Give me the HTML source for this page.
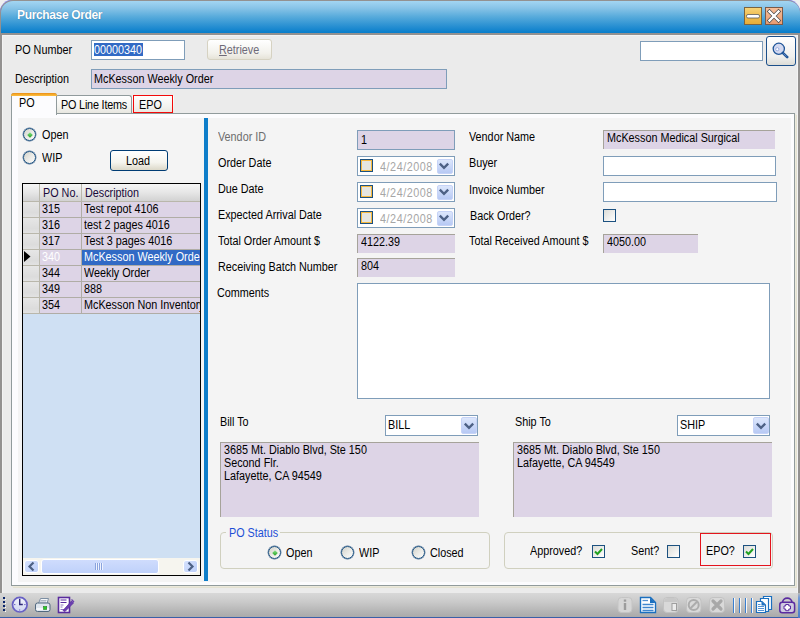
<!DOCTYPE html>
<html><head><meta charset="utf-8">
<style>
*{box-sizing:border-box;margin:0;padding:0}
html,body{width:800px;height:618px;overflow:hidden;background:#efefef}
body{position:relative;font-family:"Liberation Sans",sans-serif;font-size:11px;color:#000}
.a{position:absolute}
.t{position:absolute;white-space:nowrap;line-height:13px;font-size:12px;letter-spacing:0;transform:scaleX(0.9);transform-origin:0 0}
.box{position:absolute;border:1px solid #7f9db9;background:#fff}
.lav{position:absolute;background:#ddd4e6;border-top:1px solid #a6a39a;border-left:1px solid #a6a39a}
.lavb{position:absolute;background:#ddd4e6;border:1px solid #7f9db9}
.chk{position:absolute;width:13px;height:13px;border:1px solid #1c5180;background:linear-gradient(135deg,#dcdcd7,#fff)}
.radio{position:absolute;width:13px;height:13px;border-radius:50%;border:1px solid #1c5180;box-shadow:0 0 0 0.4px #4a6d94;background:linear-gradient(135deg,#d2d2ca 0%,#ececE8 55%,#fcfcfb 100%)}
.dot{position:absolute;left:3.5px;top:3.5px;width:4px;height:4px;transform:rotate(45deg);background:linear-gradient(135deg,#8fe68f,#1f9e1f)}
.combo{position:absolute;border:1px solid #7f9db9;background:#fff}
.dd{position:absolute;right:0;top:1px;width:16px;bottom:1px;border-radius:2px;background:linear-gradient(#dde7fc,#b7c9f4);border:1px solid #c6d3f7}
.btn{position:absolute;border:1px solid #003c74;border-radius:3px;background:linear-gradient(#ffffff 0%,#f5f4ee 60%,#dcd8c8 100%)}
</style></head>
<body>
<!-- window frame -->
<div class="a" style="left:0;top:0;width:800px;height:618px;background:#939190;border-radius:13px 13px 0 0;box-shadow:0 0 0 0.6px #8c8cf0"></div>
<div class="a" style="left:1px;top:1px;width:799px;height:32px;border-radius:12px 12px 0 0;background:linear-gradient(#a3d5f2 0%,#88c4e7 22%,#56aadb 50%,#2e93d3 75%,#077dcb 100%)"></div>
<div class="t" style="left:17px;top:7px;font-size:12px;font-weight:bold;color:#fff;letter-spacing:-0.35px;transform:none;line-height:16px;text-shadow:0 0 1px rgba(0,40,90,0.5)">Purchase Order</div>
<!-- min / close -->
<svg class="a" style="left:744px;top:7px" width="40" height="18">
<defs><linearGradient id="gmin" x1="0" y1="0" x2="0" y2="1"><stop offset="0" stop-color="#f7d47a"/><stop offset="0.5" stop-color="#efbd4f"/><stop offset="1" stop-color="#e7ac35"/></linearGradient>
<linearGradient id="gcl" x1="0" y1="0" x2="0" y2="1"><stop offset="0" stop-color="#f6bf9a"/><stop offset="1" stop-color="#e89a70"/></linearGradient></defs>
<rect x="0.5" y="0.5" width="17" height="17" fill="url(#gmin)" stroke="#7a6440"/>
<rect x="2.5" y="7.5" width="13" height="3.5" rx="1.5" fill="#fff" stroke="#5a5a5a" stroke-width="0.8"/>
<rect x="21.5" y="0.5" width="17" height="17" fill="url(#gcl)" stroke="#7a5a48"/>
<path d="M25.5 4.5L34.5 13.5M34.5 4.5L25.5 13.5" stroke="#4a4a4a" stroke-width="3.8" stroke-linecap="square"/>
<path d="M25.5 4.5L34.5 13.5M34.5 4.5L25.5 13.5" stroke="#fff" stroke-width="2.4" stroke-linecap="square"/>
</svg>

<!-- body -->
<div class="a" style="left:2px;top:35px;width:796px;height:558px;background:#ebebeb;border:1px solid #f3f3f3;border-bottom:none"></div>

<div class="t" style="left:15px;top:44px">PO Number</div>
<div class="box" style="left:91px;top:40px;width:94px;height:20px"></div>
<div class="a" style="left:94px;top:43px;width:49px;height:13px;background:#316ac5"></div>
<div class="t" style="left:94px;top:44px;color:#fff">00000340</div>
<div class="btn" style="left:207px;top:39px;width:65px;height:21px;border-color:#d6d2c2;background:linear-gradient(#ffffff,#f2f1eb 70%,#e6e3d8)"></div>
<div class="t" style="left:219px;top:44px;color:#6e6a78"><u>R</u>etrieve</div>

<div class="t" style="left:15px;top:73px">Description</div>
<div class="lavb" style="left:91px;top:69px;width:356px;height:20px"></div>
<div class="t" style="left:94px;top:73px">McKesson Weekly Order</div>

<div class="box" style="left:640px;top:41px;width:123px;height:20px"></div>
<div class="btn" style="left:766px;top:36px;width:30px;height:30px;border-color:#1c4f8a;background:linear-gradient(#fff,#f0f0ee 70%,#dcdcd7)"></div>
<svg class="a" style="left:771px;top:41px" width="20" height="20"><circle cx="7.8" cy="7.8" r="5.6" fill="#d3d9f0" stroke="#1f5598" stroke-width="1.3"/><circle cx="6.3" cy="8.2" r="1.6" fill="#fff" stroke="#90a6dc" stroke-width="0.9"/><path d="M11.8 11.8L16.2 16.2" stroke="#1f5598" stroke-width="2.6" stroke-linecap="round"/><path d="M12.5 12.5L15.5 15.5" stroke="#6f90c8" stroke-width="0.8"/></svg>

<!-- tabs -->
<div class="a" style="left:56px;top:95px;width:76px;height:19px;border:1px solid #919b9c;border-bottom:none;border-radius:2px 3px 0 0;background:linear-gradient(#fff,#f3f3ef 60%,#e6e5de)"></div>
<div class="t" style="left:61px;top:99px;letter-spacing:-0.2px">PO Line Items</div>
<div class="a" style="left:132px;top:95px;width:42px;height:19px;border-radius:2px 2px 0 0;background:linear-gradient(#fff,#f3f3ef 60%,#e6e5de)"></div>
<div class="a" style="left:133px;top:95px;width:40px;height:18px;border:1px solid #f20a0a"></div>
<div class="t" style="left:139px;top:99px">EPO</div>

<!-- tab panel -->
<div class="a" style="left:11px;top:113px;width:784px;height:473px;border:1px solid #919b9c;background:#fcfcfe;box-shadow:1px 1px 0 #ebe9dc,2px 2px 0 #e4e2d2"></div>
<div class="a" style="left:11px;top:93px;width:46px;height:22px;border:1px solid #919b9c;border-bottom:none;border-radius:3px 3px 0 0;background:#fcfcfe"></div>
<div class="a" style="left:11px;top:93px;width:46px;height:3px;border-radius:3px 3px 0 0;background:linear-gradient(#e98d18,#f6ad2c 55%,#fbbe45)"></div>
<div class="t" style="left:19px;top:97px">PO</div>
<div class="a" style="left:18px;top:118px;width:773px;height:464px;background:#f4f4f4"></div>

<!-- left -->
<div class="radio" style="left:23px;top:128px"><div class="dot"></div></div>
<div class="t" style="left:42px;top:129px">Open</div>
<div class="radio" style="left:23px;top:151px"></div>
<div class="t" style="left:42px;top:152px">WIP</div>
<div class="btn" style="left:110px;top:150px;width:58px;height:21px"></div>
<div class="t" style="left:126px;top:155px">Load</div>

<div id="grid" class="a" style="left:22px;top:183px;width:179px;height:393px;border:1px solid #000;background:#cfe0f3;overflow:hidden"><div class="a" style="left:0;top:0;width:177px;height:17px;background:linear-gradient(#f6f6f6,#e6e6e6 50%,#d2d2d2)"></div><div class="a" style="left:0;top:17px;width:177px;height:1px;background:#b9b7ab"></div><div class="a" style="left:16px;top:0;width:1px;height:17px;background:#b9b7ab"></div><div class="a" style="left:58px;top:0;width:1px;height:17px;background:#b9b7ab"></div><div class="t" style="left:20px;top:3px;color:#1a0a3a">PO No.</div><div class="t" style="left:62px;top:3px;color:#1a0a3a">Description</div><div class="a" style="left:0;top:18px;width:16px;height:16px;background:linear-gradient(#e6e6e6,#dcdcdc 70%,#e2e2e2);border-bottom:1px solid #b9b7ab"></div><div class="a" style="left:16px;top:18px;width:1px;height:16px;background:#b9b7ab"></div><div class="a" style="left:17px;top:18px;width:160px;height:16px;background:#ddd4e6;border-bottom:1px solid #b0ada5"></div><div class="a" style="left:58px;top:18px;width:1px;height:16px;background:#b0ada5"></div><div class="t" style="left:19px;top:19px;color:#000">315</div><div class="t" style="left:61px;top:19px;color:#000">Test repot 4106</div><div class="a" style="left:0;top:34px;width:16px;height:16px;background:linear-gradient(#e6e6e6,#dcdcdc 70%,#e2e2e2);border-bottom:1px solid #b9b7ab"></div><div class="a" style="left:16px;top:34px;width:1px;height:16px;background:#b9b7ab"></div><div class="a" style="left:17px;top:34px;width:160px;height:16px;background:#ddd4e6;border-bottom:1px solid #b0ada5"></div><div class="a" style="left:58px;top:34px;width:1px;height:16px;background:#b0ada5"></div><div class="t" style="left:19px;top:35px;color:#000">316</div><div class="t" style="left:61px;top:35px;color:#000">test 2 pages 4016</div><div class="a" style="left:0;top:50px;width:16px;height:16px;background:linear-gradient(#e6e6e6,#dcdcdc 70%,#e2e2e2);border-bottom:1px solid #b9b7ab"></div><div class="a" style="left:16px;top:50px;width:1px;height:16px;background:#b9b7ab"></div><div class="a" style="left:17px;top:50px;width:160px;height:16px;background:#ddd4e6;border-bottom:1px solid #b0ada5"></div><div class="a" style="left:58px;top:50px;width:1px;height:16px;background:#b0ada5"></div><div class="t" style="left:19px;top:51px;color:#000">317</div><div class="t" style="left:61px;top:51px;color:#000">Test 3 pages 4016</div><div class="a" style="left:0;top:66px;width:16px;height:16px;background:linear-gradient(#e6e6e6,#dcdcdc 70%,#e2e2e2);border-bottom:1px solid #b9b7ab"></div><div class="a" style="left:16px;top:66px;width:1px;height:16px;background:#b9b7ab"></div><div class="a" style="left:17px;top:66px;width:160px;height:16px;background:#ddd4e6;border-bottom:1px solid #b0ada5"></div><div class="a" style="left:58px;top:66px;width:1px;height:16px;background:#b0ada5"></div><div class="a" style="left:59px;top:66px;width:118px;height:15px;background:#316ac5"></div><svg class="a" style="left:1px;top:67px" width="8" height="12"><path d="M0 0L6.5 5.5L0 11Z" fill="#000"/></svg><div class="t" style="left:19px;top:67px;color:#fff">340</div><div class="t" style="left:61px;top:67px;color:#fff">McKesson Weekly Order</div><div class="a" style="left:0;top:82px;width:16px;height:16px;background:linear-gradient(#e6e6e6,#dcdcdc 70%,#e2e2e2);border-bottom:1px solid #b9b7ab"></div><div class="a" style="left:16px;top:82px;width:1px;height:16px;background:#b9b7ab"></div><div class="a" style="left:17px;top:82px;width:160px;height:16px;background:#ddd4e6;border-bottom:1px solid #b0ada5"></div><div class="a" style="left:58px;top:82px;width:1px;height:16px;background:#b0ada5"></div><div class="t" style="left:19px;top:83px;color:#000">344</div><div class="t" style="left:61px;top:83px;color:#000">Weekly Order</div><div class="a" style="left:0;top:98px;width:16px;height:16px;background:linear-gradient(#e6e6e6,#dcdcdc 70%,#e2e2e2);border-bottom:1px solid #b9b7ab"></div><div class="a" style="left:16px;top:98px;width:1px;height:16px;background:#b9b7ab"></div><div class="a" style="left:17px;top:98px;width:160px;height:16px;background:#ddd4e6;border-bottom:1px solid #b0ada5"></div><div class="a" style="left:58px;top:98px;width:1px;height:16px;background:#b0ada5"></div><div class="t" style="left:19px;top:99px;color:#000">349</div><div class="t" style="left:61px;top:99px;color:#000">888</div><div class="a" style="left:0;top:114px;width:16px;height:16px;background:linear-gradient(#e6e6e6,#dcdcdc 70%,#e2e2e2);border-bottom:1px solid #b9b7ab"></div><div class="a" style="left:16px;top:114px;width:1px;height:16px;background:#b9b7ab"></div><div class="a" style="left:17px;top:114px;width:160px;height:16px;background:#ddd4e6;border-bottom:1px solid #b0ada5"></div><div class="a" style="left:58px;top:114px;width:1px;height:16px;background:#b0ada5"></div><div class="t" style="left:19px;top:115px;color:#000">354</div><div class="t" style="left:61px;top:115px;color:#000">McKesson Non Inventory</div><div class="a" style="left:0;top:374px;width:177px;height:17px;background:#f6f5ef"></div>
<div class="a" style="left:1px;top:376px;width:15px;height:13px;border:1px solid #fff;border-radius:3px;background:linear-gradient(135deg,#d6e2fd,#bccffa)"></div>
<svg class="a" style="left:1px;top:376px" width="15" height="13"><path d="M9.5 2.5L5.5 6.5L9.5 10.5" stroke="#4d6185" stroke-width="2.2" fill="none"/></svg>
<div class="a" style="left:18px;top:375px;width:118px;height:15px;border:1px solid #fff;border-radius:3px;background:linear-gradient(#cfdcfd,#bfd1fa)"></div>
<div class="a" style="left:72px;top:379px;width:8px;height:7px;background:repeating-linear-gradient(90deg,#8aa3dd 0 1px,#eef3ff 1px 2px)"></div>
<div class="a" style="left:160px;top:376px;width:15px;height:13px;border:1px solid #fff;border-radius:3px;background:linear-gradient(135deg,#d6e2fd,#bccffa)"></div>
<svg class="a" style="left:160px;top:376px" width="15" height="13"><path d="M5.5 2.5L9.5 6.5L5.5 10.5" stroke="#4d6185" stroke-width="2.2" fill="none"/></svg></div>

<!-- blue bar -->
<div class="a" style="left:204px;top:118px;width:4px;height:463px;background:#0e7dc9"></div>


<!-- form col1 -->
<div class="t" style="left:218px;top:131px;color:#6d6d6d">Vendor ID</div>
<div class="t" style="left:218px;top:157px">Order Date</div>
<div class="t" style="left:218px;top:183px">Due Date</div>
<div class="t" style="left:218px;top:209px">Expected Arrival Date</div>
<div class="t" style="left:218px;top:235px">Total Order Amount $</div>
<div class="t" style="left:218px;top:261px">Receiving Batch Number</div>
<div class="t" style="left:217px;top:287px">Comments</div>

<div class="lavb" style="left:357px;top:130px;width:98px;height:20px"></div>
<div class="t" style="left:361px;top:134px">1</div>
<div class="box" style="left:357px;top:156px;width:98px;height:20px"></div><div class="a" style="left:360px;top:159px;width:13px;height:13px;border:1px solid #1c5180;background:#e6e6e0;box-shadow:inset 0 0 0 1px #f8b93e"></div><div class="t" style="left:380px;top:161px;color:#a6a6a6;letter-spacing:0.6px">4/24/2008</div><div class="a" style="left:437px;top:159px;width:16px;height:15px;border-radius:2px;background:linear-gradient(#dde7fc,#b7c9f4);border:1px solid #c6d3f7"></div><svg class="a" style="left:438px;top:160px" width="12" height="12"><path d="M1.8 3.6L6 7.8L10.2 3.6" stroke="#4d6185" stroke-width="2.3" fill="none"/></svg><div class="box" style="left:357px;top:182px;width:98px;height:20px"></div><div class="a" style="left:360px;top:185px;width:13px;height:13px;border:1px solid #1c5180;background:#e6e6e0;box-shadow:inset 0 0 0 1px #f8b93e"></div><div class="t" style="left:380px;top:187px;color:#a6a6a6;letter-spacing:0.6px">4/24/2008</div><div class="a" style="left:437px;top:185px;width:16px;height:15px;border-radius:2px;background:linear-gradient(#dde7fc,#b7c9f4);border:1px solid #c6d3f7"></div><svg class="a" style="left:438px;top:186px" width="12" height="12"><path d="M1.8 3.6L6 7.8L10.2 3.6" stroke="#4d6185" stroke-width="2.3" fill="none"/></svg><div class="box" style="left:357px;top:208px;width:98px;height:20px"></div><div class="a" style="left:360px;top:211px;width:13px;height:13px;border:1px solid #1c5180;background:#e6e6e0;box-shadow:inset 0 0 0 1px #f8b93e"></div><div class="t" style="left:380px;top:213px;color:#a6a6a6;letter-spacing:0.6px">4/24/2008</div><div class="a" style="left:437px;top:211px;width:16px;height:15px;border-radius:2px;background:linear-gradient(#dde7fc,#b7c9f4);border:1px solid #c6d3f7"></div><svg class="a" style="left:438px;top:212px" width="12" height="12"><path d="M1.8 3.6L6 7.8L10.2 3.6" stroke="#4d6185" stroke-width="2.3" fill="none"/></svg>
<div class="lav" style="left:357px;top:234px;width:98px;height:19px"></div>
<div class="t" style="left:361px;top:236px">4122.39</div>
<div class="lav" style="left:357px;top:258px;width:98px;height:19px"></div>
<div class="t" style="left:361px;top:260px">804</div>
<div class="box" style="left:357px;top:283px;width:413px;height:116px"></div>

<!-- form col2 -->
<div class="t" style="left:469px;top:131px">Vendor Name</div>
<div class="t" style="left:469px;top:157px">Buyer</div>
<div class="t" style="left:469px;top:184px">Invoice Number</div>
<div class="t" style="left:470px;top:210px">Back Order?</div>
<div class="t" style="left:469px;top:235px">Total Received Amount $</div>
<div class="lav" style="left:603px;top:130px;width:172px;height:19px"></div>
<div class="t" style="left:607px;top:132px">McKesson Medical Surgical</div>
<div class="box" style="left:603px;top:156px;width:173px;height:20px"></div>
<div class="box" style="left:603px;top:182px;width:174px;height:20px"></div>
<div class="chk" style="left:603px;top:209px"></div>
<div class="lav" style="left:603px;top:234px;width:95px;height:19px"></div>
<div class="t" style="left:607px;top:236px">4050.00</div>

<!-- bill / ship -->
<div class="t" style="left:220px;top:416px">Bill To</div>
<div class="combo" style="left:385px;top:415px;width:93px;height:21px"><div class="dd"></div></div>
<svg class="a" style="left:463px;top:420px" width="12" height="12"><path d="M1.8 3.6L6 7.8L10.2 3.6" stroke="#4d6185" stroke-width="2.3" fill="none"/></svg>
<div class="t" style="left:388px;top:419px">BILL</div>
<div class="lav" style="left:220px;top:442px;width:259px;height:75px"></div>
<div class="t" style="left:224px;top:444px">3685 Mt. Diablo Blvd, Ste 150<br>Second Flr.<br>Lafayette, CA 94549</div>

<div class="t" style="left:515px;top:416px">Ship To</div>
<div class="combo" style="left:677px;top:415px;width:93px;height:21px"><div class="dd"></div></div>
<svg class="a" style="left:755px;top:420px" width="12" height="12"><path d="M1.8 3.6L6 7.8L10.2 3.6" stroke="#4d6185" stroke-width="2.3" fill="none"/></svg>
<div class="t" style="left:680px;top:419px">SHIP</div>
<div class="lav" style="left:513px;top:442px;width:259px;height:75px"></div>
<div class="t" style="left:517px;top:444px">3685 Mt. Diablo Blvd, Ste 150<br>Lafayette, CA 94549</div>

<!-- PO status group -->
<div class="a" style="left:220px;top:532px;width:270px;height:37px;border:1px solid #d0d0bf;border-radius:4px"></div>
<div class="a" style="left:226px;top:528px;width:54px;height:8px;background:#f4f4f4"></div>
<div class="t" style="left:229px;top:527px;color:#1d4fd6">PO Status</div>
<div class="radio" style="left:268px;top:546px"><div class="dot"></div></div>
<div class="t" style="left:286px;top:547px">Open</div>
<div class="radio" style="left:341px;top:546px"></div>
<div class="t" style="left:359px;top:547px">WIP</div>
<div class="radio" style="left:412px;top:546px"></div>
<div class="t" style="left:430px;top:547px">Closed</div>

<!-- approved group -->
<div class="a" style="left:504px;top:532px;width:269px;height:37px;border:1px solid #d0d0bf;border-radius:4px"></div>
<div class="t" style="left:530px;top:545px">Approved?</div>
<div class="chk" style="left:592px;top:545px"></div>
<svg class="a" style="left:592px;top:545px" width="13" height="13"><path d="M3 6.5L5.5 9L10 4" stroke="#21a121" stroke-width="2" fill="none"/></svg>
<div class="t" style="left:631px;top:545px">Sent?</div>
<div class="chk" style="left:667px;top:545px"></div>
<div class="a" style="left:700px;top:533px;width:71px;height:33px;border:1px solid #e4141d"></div>
<div class="t" style="left:706px;top:545px">EPO?</div>
<div class="chk" style="left:743px;top:545px"></div>
<svg class="a" style="left:743px;top:545px" width="13" height="13"><path d="M3 6.5L5.5 9L10 4" stroke="#21a121" stroke-width="2" fill="none"/></svg>

<!-- toolbar -->
<div class="a" style="left:0;top:593px;width:800px;height:25px;background:linear-gradient(#d8d8d8,#cacaca 35%,#b4b4b4 75%,#a8a8a8)"></div>
<div class="a" style="left:0;top:617px;width:800px;height:1px;background:#3a5fa8"></div>
<div class="a" style="left:798px;top:593px;width:2px;height:25px;background:linear-gradient(#b8b8b8,#6f98d8 20%,#4a7cc8)"></div>

<!-- toolbar icons -->
<svg class="a" style="left:0;top:593px" width="800" height="25">
<g fill="#0a246a">
<rect x="3" y="4" width="2" height="2"/><rect x="3" y="8" width="2" height="2"/><rect x="3" y="12" width="2" height="2"/><rect x="3" y="16" width="2" height="2"/>
</g>
<g fill="#fff"><rect x="5" y="6" width="1" height="1"/><rect x="5" y="10" width="1" height="1"/><rect x="5" y="14" width="1" height="1"/><rect x="5" y="18" width="1" height="1"/></g>
<!-- clock -->
<defs><linearGradient id="gclk" x1="0" y1="0" x2="0" y2="1"><stop offset="0" stop-color="#f4f6fc"/><stop offset="1" stop-color="#cdd3f0"/></linearGradient></defs>
<circle cx="19.8" cy="11.7" r="7.3" fill="url(#gclk)" stroke="#6860c4" stroke-width="1.7"/>
<path d="M19.7 5.8V11.5H22.8" stroke="#2e2878" stroke-width="1.4" fill="none"/>
<path d="M14 11.6H15.4M24.2 11.6H25.6M19.7 16.4V17.6" stroke="#6860c4" stroke-width="1"/>
<!-- printer -->
<path d="M40.5 5.5H48.5L47 10.5H38.5Z" fill="#f4f6f8" stroke="#7d8fa3" stroke-width="1"/>
<path d="M40.5 7.5H46.5M40 9H46" stroke="#9aa8b8" stroke-width="0.8"/>
<rect x="35.5" y="10" width="14.5" height="8.5" rx="2" fill="#dfe6ee" stroke="#51687f" stroke-width="1"/>
<rect x="36.5" y="15" width="12.5" height="2" fill="#f6f8fb"/>
<rect x="43.5" y="13.5" width="3.2" height="3" fill="#22d022" stroke="#2a7a2a" stroke-width="0.6"/>
<!-- edit doc -->
<rect x="58.5" y="4.5" width="11" height="15" fill="#fff" stroke="#5a2c9e" stroke-width="1.6"/>
<path d="M60.5 7H66.5M60.5 9.5H66.5" stroke="#5a2c9e" stroke-width="1.1"/>
<path d="M60.5 12H63.5M60.5 14H62.5M60.5 16.5H66" stroke="#8d75c0" stroke-width="1"/>
<path d="M63 17.5L71.5 8L73.5 10L65 18.5Z" fill="#6a3eb0" stroke="#5a2c9e" stroke-width="0.8"/>
<path d="M71.5 6.5L74 9" stroke="#6a3eb0" stroke-width="1.2"/>
<!-- right icons -->
<rect x="618" y="4.5" width="14" height="15" rx="3.5" fill="#d6d6d6" stroke="#c4c4c4" stroke-width="1"/>
<rect x="623.8" y="10" width="2.4" height="7" fill="#9c9c9c"/><rect x="623.8" y="6.5" width="2.4" height="2.2" fill="#9c9c9c"/>
<path d="M640.5 4.5H650.5L655.5 9.5V19.5H640.5Z" fill="#fff" stroke="#1a6fbf" stroke-width="1.4"/>
<path d="M650 4.5V10H655.5Z" fill="#1a6fbf"/>
<path d="M642.5 7.5H648" stroke="#5592d3" stroke-width="1.3"/>
<path d="M642.5 11.5H653.5M642.5 14.5H653.5M642.5 17.5H653.5" stroke="#3f86cf" stroke-width="1.6"/>
<rect x="663.5" y="4.5" width="14.5" height="15" rx="3.5" fill="#d9d9d9" stroke="#c2c2c2" stroke-width="1"/>
<path d="M664 9C664 6 666 5 668 5H674C676 5 677.5 6 677.5 9Z" fill="#c8c8c8"/>
<rect x="672" y="10.5" width="4.5" height="7" fill="#ececec" stroke="#9e9e9e" stroke-width="1"/>
<rect x="686.5" y="4.5" width="14.5" height="15" rx="3.5" fill="#d9d9d9" stroke="#c2c2c2" stroke-width="1"/>
<circle cx="693.7" cy="12" r="5" fill="none" stroke="#acacac" stroke-width="2"/>
<path d="M690.5 15.2L697 8.8" stroke="#acacac" stroke-width="2"/>
<rect x="709.5" y="4.5" width="15" height="15" rx="3.5" fill="#d9d9d9" stroke="#c2c2c2" stroke-width="1"/>
<path d="M713 8L721 16M721 8L713 16" stroke="#a8a8a8" stroke-width="3.2" stroke-linecap="round"/>
<path d="M733.5 5V20M739.5 5V20M745.5 5V20M751.5 5V20" stroke="#3a7fd0" stroke-width="1"/>
<path d="M734.5 5V20M740.5 5V20M746.5 5V20M752.5 5V20" stroke="#f8f8f8" stroke-width="1"/>
<path d="M763.5 3.5H771.5V16.5H763.5Z" fill="#fff" stroke="#1a6fbf" stroke-width="1.2"/>
<path d="M760.5 5.5H768.5V18.5H760.5Z" fill="#fff" stroke="#1a6fbf" stroke-width="1.2"/>
<path d="M756.5 8.5H762L765.5 12V19.5H756.5Z" fill="#fff" stroke="#1a6fbf" stroke-width="1.2"/>
<path d="M761.5 8.5V12.5H765.5Z" fill="#1a6fbf"/>
<path d="M758 11.5H760.5M758 13.5H764M758 15.5H764M758 17.5H764" stroke="#3f86cf" stroke-width="0.9"/>
<path d="M782.5 9.8C782.5 3.6 792 3.6 792 9.8" fill="none" stroke="#5b2ca0" stroke-width="1.6"/>
<rect x="779.8" y="9.3" width="14.8" height="10.4" rx="2.5" fill="#cfcbe0" stroke="#5b2ca0" stroke-width="1.5"/>
<path d="M785.7 11.5H788.8V13H790.5V16H788.8V17.7H785.7V16H784V13H785.7Z" fill="#fff" stroke="#5b2ca0" stroke-width="1"/>
</svg>
</body></html>
